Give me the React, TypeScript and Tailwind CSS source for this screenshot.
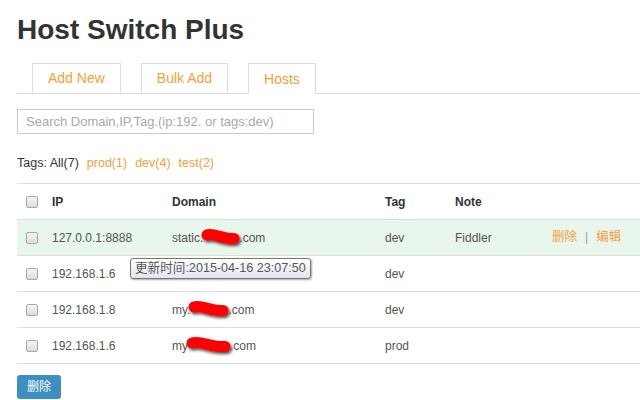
import React from 'react'

const orange = 'text-[#f7a03a]'

type Row = {
  ip: string
  prefix: string
  blobW: number
  tag: string
  note?: string
  active?: boolean
  hidden?: boolean
}

const rows: Row[] = [
  { ip: '127.0.0.1:8888', prefix: 'static.', blobW: 44, tag: 'dev', note: 'Fiddler', active: true },
  { ip: '192.168.1.6', prefix: 'my.', blobW: 40, tag: 'dev', hidden: true },
  { ip: '192.168.1.8', prefix: 'my.', blobW: 46, tag: 'dev' },
  { ip: '192.168.1.6', prefix: 'my', blobW: 50, tag: 'prod' },
]

function Checkbox() {
  return (
    <span className="inline-block w-[12px] h-[12px] rounded-[2px] border border-[#a9a9a9] bg-gradient-to-b from-[#f4f4f4] to-[#dcdcdc]" />
  )
}

// red scribble that hides part of a domain
function Blob({ w, id }: { w: number; id: string }) {
  return (
    <svg width={w} height="24" viewBox={`0 0 ${w} 24`} className="inline-block shrink-0 -mx-[4px] -my-[5px]">
      <defs>
        <filter id={id} filterUnits="userSpaceOnUse" x="0" y="0" width={w} height="24">
          <feDropShadow dx="1.5" dy="2" stdDeviation="1.4" floodColor="#000" floodOpacity="0.7" />
        </filter>
      </defs>
      <path
        d={`M8 9 C ${w * 0.3} 7, ${w * 0.45} 11, ${w * 0.62} 12 S ${w - 12} 12.5, ${w - 9} 12.5`}
        stroke="#ff0000"
        strokeWidth="11"
        strokeLinecap="round"
        strokeLinejoin="round"
        fill="none"
        filter={`url(#${id})`}
      />
    </svg>
  )
}

const grid = 'grid grid-cols-[35px_120px_213px_70px_97px_1fr] items-center h-[36px] border-b border-[#dddddd]'

export default function App() {
  return (
    <div className="w-[640px] h-[400px] overflow-hidden bg-white pl-[17px] text-[#555] text-[12px]" style={{ fontFamily: '"Liberation Sans", Arial, "Noto Sans CJK SC", sans-serif' }}>
      <div className="pt-[14px]">
        <h1 className="h-[32px] leading-[32px] text-[28px] font-bold text-[#333]">Host Switch Plus</h1>
      </div>

      {/* Tabs */}
      <div className="mt-[17px] flex border-b border-[#dddddd] pl-[15px] gap-[20px] text-[14px]">
        <div className={`h-[30px] px-[15px] flex items-center border border-b-0 border-[#dddddd] ${orange}`}>Add New</div>
        <div className={`h-[30px] px-[15px] flex items-center border border-b-0 border-[#dddddd] ${orange}`}>Bulk Add</div>
        <div className={`h-[31px] -mb-px px-[15px] flex items-center border border-b-0 border-[#dddddd] bg-white ${orange}`}>Hosts</div>
      </div>

      {/* Search */}
      <div className="mt-[15px]">
        <input
          className="w-[297px] h-[25px] border border-[#cccccc] px-[8px] text-[13px] text-[#555] placeholder:text-[#a9a9a9] outline-none"
          placeholder="Search Domain,IP,Tag.(ip:192. or tags:dev)"
        />
      </div>

      {/* Tags */}
      <div className="mt-[20px] h-[18px] leading-[18px] flex gap-[8px] text-[12.5px]">
        <span className="text-[#333]">Tags: All(7)</span>
        <span className={orange}>prod(1)</span>
        <span className={orange}>dev(4)</span>
        <span className={orange}>test(2)</span>
      </div>

      {/* Table */}
      <div className="relative mt-[11px] border-t border-[#dddddd]">
        <div className={`${grid} font-bold text-[#333]`}>
          <div className="pl-[9px] flex"><Checkbox /></div>
          <div>IP</div>
          <div>Domain</div>
          <div>Tag</div>
          <div>Note</div>
          <div />
        </div>
        {rows.map((r, i) => (
          <div key={i} className={`${grid} ${r.active ? 'bg-[#e8f6ec]' : ''}`}>
            <div className="pl-[9px] flex"><Checkbox /></div>
            <div>{r.ip}</div>
            <div className="whitespace-nowrap flex items-center">
              {!r.hidden && (
                <>
                  <span>{r.prefix}</span>
                  <Blob w={r.blobW} id={`blob-sh-${i}`} />
                  <span>.com</span>
                </>
              )}
            </div>
            <div>{r.tag}</div>
            <div>{r.note ?? ''}</div>
            <div className="flex items-center gap-[8px] text-[12.5px]">
              {r.active && (
                <>
                  <span className={orange}>删除</span>
                  <span className="text-[#9ab]">|</span>
                  <span className={orange}>编辑</span>
                </>
              )}
            </div>
          </div>
        ))}

        {/* tooltip */}
        <div className="absolute left-[113px] top-[74px] h-[21px] w-[181px] px-[4px] flex items-center rounded-[3px] border border-[#767676] bg-gradient-to-b from-white to-[#e4e5f0] text-[12.6px] text-[#575757] shadow-[1px_1px_2px_rgba(0,0,0,0.35)] whitespace-nowrap">
          更新时间:2015-04-16 23:07:50
        </div>
      </div>

      <div className="mt-[11px]">
        <button className="h-[24px] w-[44px] rounded-[3px] bg-[#3d8ec1] text-white text-[12px]">删除</button>
      </div>
    </div>
  )
}
